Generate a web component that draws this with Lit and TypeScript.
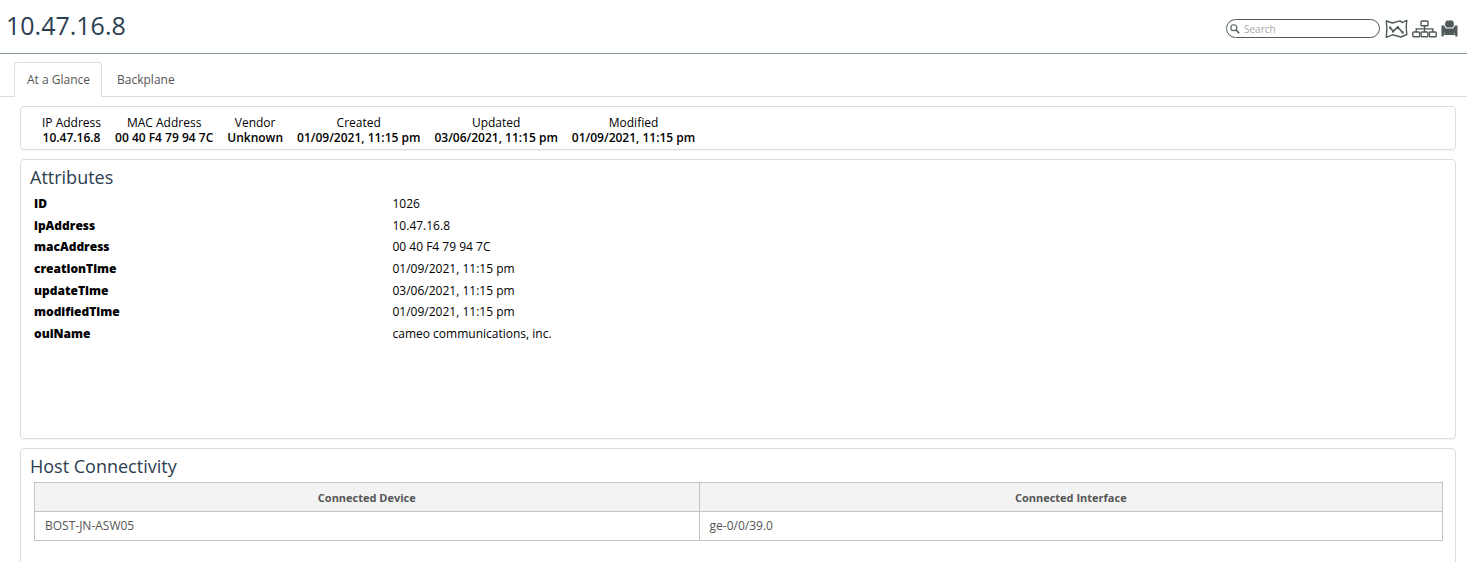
import { LitElement, html, css } from "lit";
import { customElement, state } from "lit/decorators.js";
import { classMap } from "lit/directives/class-map.js";

const summary = [
  ["IP Address", "10.47.16.8"],
  ["MAC Address", "00 40 F4 79 94 7C"],
  ["Vendor", "Unknown"],
  ["Created", "01/09/2021, 11:15 pm"],
  ["Updated", "03/06/2021, 11:15 pm"],
  ["Modified", "01/09/2021, 11:15 pm"],
];

const attributes = [
  ["ID", "1026"],
  ["ipAddress", "10.47.16.8"],
  ["macAddress", "00 40 F4 79 94 7C"],
  ["creationTime", "01/09/2021, 11:15 pm"],
  ["updateTime", "03/06/2021, 11:15 pm"],
  ["modifiedTime", "01/09/2021, 11:15 pm"],
  ["ouiName", "cameo communications, inc."],
];

const connections = [["BOST-JN-ASW05", "ge-0/0/39.0"]];

@customElement("app-root")
export class AppRoot extends LitElement {
  @state() private tab = "At a Glance";

  static styles = css`
    :host {
      display: flex;
      flex-direction: column;
      height: 100vh;
      overflow: hidden;
      background: #fff;
      color: #000;
      font: 12px/15px "Open Sans", "Noto Sans", sans-serif;
    }
    * {
      box-sizing: border-box;
    }
    .header {
      display: flex;
      flex: none;
      justify-content: space-between;
      align-items: center;
      height: 54px;
      padding: 0 9px 0 6px;
      border-bottom: 1px solid #8b9f9a;
    }
    .title {
      margin: 0;
      padding-bottom: 3px;
      font-size: 25px;
      line-height: 34px;
      font-weight: 400;
      color: #2c3e50;
    }
    .tools {
      display: flex;
      align-items: center;
      gap: 4px;
      padding-top: 4px;
      color: #505a5a;
    }
    .search {
      display: flex;
      align-items: center;
      gap: 4px;
      width: 154px;
      height: 19px;
      margin-right: 1px;
      padding: 0 8px 0 3px;
      border: 1px solid #505a5a;
      border-radius: 10px;
    }
    .search-input {
      flex: 1;
      min-width: 0;
      padding: 0;
      border: 0;
      outline: 0;
      background: none;
      font: 10px/14px "Open Sans", "Noto Sans", sans-serif;
      color: #333;
    }
    .search-input::placeholder {
      color: #a9a9a9;
      opacity: 1;
    }
    .tool {
      display: flex;
      padding: 0;
      border: 0;
      background: none;
      color: inherit;
      cursor: pointer;
    }
    svg {
      display: block;
      flex: none;
    }
    .tabs {
      display: flex;
      flex: none;
      gap: 2px;
      margin-top: 8px;
      padding-left: 14px;
      box-shadow: inset 0 -1px #ddd;
    }
    .tab {
      height: 35px;
      padding: 0 11px 2px 12px;
      border: 1px solid transparent;
      border-bottom: 0;
      border-radius: 4px 4px 0 0;
      background: none;
      font: inherit;
      color: #555;
      cursor: pointer;
    }
    .tab.active {
      border-color: #ddd;
      background: #fff;
    }
    .content {
      display: flex;
      flex-direction: column;
      gap: 9px;
      padding: 9px 11px 0 20px;
    }
    .card {
      flex: none;
      border: 1px solid #ddd;
      border-radius: 4px;
      box-shadow: 0 1px 1px rgba(0, 0, 0, 0.05);
    }
    .panel {
      min-height: 280px;
    }
    .summary {
      display: flex;
      gap: 14px;
      margin: 0;
      padding: 8px 21px 4px;
      text-align: center;
    }
    .summary dd {
      margin: 0;
      font-weight: 600;
    }
    .heading {
      margin: 0;
      padding: 5px 9px 4px;
      font-size: 18px;
      line-height: 24px;
      font-weight: 400;
      color: #2c3e50;
    }
    .attributes {
      display: grid;
      grid-template-columns: 1fr 3fr;
      align-items: center;
      min-height: 151px;
      margin: 0;
    }
    .attributes dt,
    .attributes dd {
      margin: 0;
      padding-left: 13px;
    }
    .attributes dt {
      font-weight: 800;
    }
    .table-wrap {
      padding: 0 12px 0 13px;
    }
    .table {
      width: 100%;
      table-layout: fixed;
      border-collapse: collapse;
      color: #555;
    }
    .table th,
    .table td {
      height: 29px;
      padding: 0 10px;
      border: 1px solid #c4c4c4;
      text-align: left;
    }
    .table td {
      padding-bottom: 2px;
    }
    .table th {
      background: #f3f3f3;
      font-size: 11px;
      font-weight: 700;
      text-align: center;
    }
    .table .device {
      width: 47.2%;
    }
  `;

  render() {
    return html`
      <header class="header">
        <h1 class="title">10.47.16.8</h1>
        <div class="tools">
          <label class="search">
            <svg width="10" height="10" viewBox="0 0 10 10" fill="none" stroke="currentColor">
              <circle cx="3.8" cy="3.8" r="3" stroke-width="1.1" />
              <path d="M6 6 9.2 9.2" stroke-width="1.6" />
            </svg>
            <input class="search-input" type="text" placeholder="Search" aria-label="Search" />
          </label>
          <button class="tool" aria-label="Map">
            <svg width="23" height="20" viewBox="0 0 23 20" fill="none" stroke="currentColor" stroke-linejoin="round">
              <path d="M1.3 2 7.5 4 15 1.8 17 3.6 21.8 1.4 21.2 8 21.8 15.5 16 18 7.5 15.8 1.3 18.4 1.9 10Z" stroke-width="1.4" />
              <path d="M4.8 8.4 8.2 12.2 12.8 8.2 17.6 13.4" stroke-width="1.6" />
              <path d="M4 7.5h2.2v2H4zM7 11.2h2.2v2.2H7zM11.8 7.2H14v2.2h-2.2zM16.6 12.4h2.2v2.2h-2.2z" fill="currentColor" stroke="none" />
            </svg>
          </button>
          <button class="tool" aria-label="Topology">
            <svg width="25" height="18" viewBox="0 0 25 18" fill="none" stroke="currentColor" stroke-width="1.4">
              <rect x="9" y="1" width="7" height="4.8" rx="0.8" />
              <path d="M12.5 5.8V12M4.2 12V8.9H20.8V12" />
              <rect x="0.8" y="12" width="6.8" height="4.8" rx="0.8" />
              <rect x="9.1" y="12" width="6.8" height="4.8" rx="0.8" />
              <rect x="17.4" y="12" width="6.8" height="4.8" rx="0.8" />
            </svg>
          </button>
          <button class="tool" aria-label="Print">
            <svg width="17" height="17" viewBox="0 0 17 17" fill="currentColor">
              <path d="M5.6.6h5.8l1.4 1.8v3.2L11.4 7.4H5.6L4.2 5.6V2.4z" />
              <path d="M.5 5.6h2.6l1.7 2.8h7.4l1.7-2.8h2.6v10.8h-1.9l-1.3-4H3.7l-1.3 4H.5z" />
              <path d="M4.2 11.8h8.6l1.1 3.2H3.1z" />
            </svg>
          </button>
        </div>
      </header>
      <nav class="tabs" role="tablist">
        ${["At a Glance", "Backplane"].map(
          (name) => html`<button
            role="tab"
            aria-selected=${this.tab === name}
            class=${classMap({ tab: true, active: this.tab === name })}
            @click=${() => (this.tab = name)}
          >${name}</button>`
        )}
      </nav>
      <main class="content">
        <dl class="card summary">
          ${summary.map(([k, v]) => html`<div><dt>${k}</dt><dd>${v}</dd></div>`)}
        </dl>
        <section class="card panel">
          <h2 class="heading">Attributes</h2>
          <dl class="attributes">
            ${attributes.map(([k, v]) => html`<dt>${k}</dt><dd>${v}</dd>`)}
          </dl>
        </section>
        <section class="card panel">
          <h2 class="heading">Host Connectivity</h2>
          <div class="table-wrap">
            <table class="table">
              <thead>
                <tr><th class="device">Connected Device</th><th>Connected Interface</th></tr>
              </thead>
              <tbody>
                ${connections.map(([d, i]) => html`<tr><td>${d}</td><td>${i}</td></tr>`)}
              </tbody>
            </table>
          </div>
        </section>
      </main>
    `;
  }
}
